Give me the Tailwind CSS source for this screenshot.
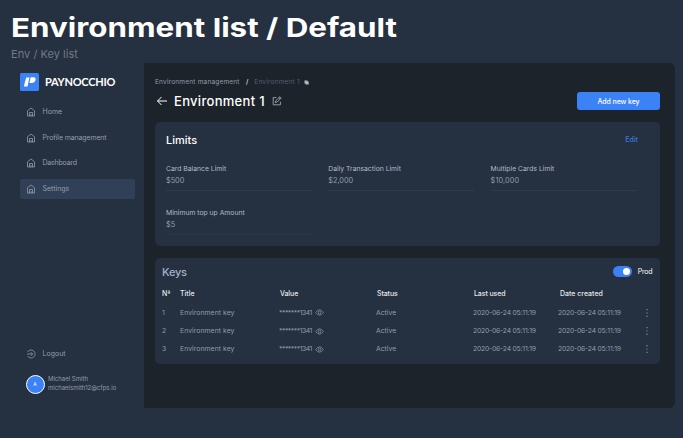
<!DOCTYPE html>
<html lang="en">
<head>
<meta charset="utf-8">
<title>Environment list</title>
<script src="https://cdn.jsdelivr.net/npm/@tailwindcss/browser@4"></script>
</head>
<body class="w-[683px] h-[438px] overflow-hidden bg-[#253040] font-['Inter',sans-serif] text-[7px] leading-[10px] text-[#949daa] whitespace-nowrap">
<svg class="hidden">
  <symbol id="home" viewBox="0 0 10 10"><path d="M1.5 3.8 5 1 8.5 3.8V9h-7zM3.5 9V5.5h3V9M5 7v2" fill="none" stroke="currentColor" stroke-width=".8" stroke-linejoin="round"/></symbol>
  <symbol id="eye" viewBox="0 0 10 8"><path d="M.6 4Q5-2.2 9.4 4 5 10.2.6 4Z" fill="none" stroke="currentColor" stroke-width=".8"/><circle cx="5" cy="4" r="1.5" fill="none" stroke="currentColor" stroke-width=".8"/></symbol>
  <symbol id="dots" viewBox="0 0 4 10"><path d="M1.5 1h1v1.2h-1zM1.5 4.4h1v1.2h-1zM1.5 7.8h1V9h-1z" fill="currentColor"/></symbol>
</svg>
<header class="h-[62.5px] pl-[11px] pt-[11px]">
  <h1 class="w-max origin-left scale-x-[1.205] text-[26px] leading-[34px] font-bold text-white">Environment list / Default</h1>
  <p class="mt-[2px] text-[11px] leading-[15px] tracking-[0.04px] text-[#727a84]">Env / Key list</p>
</header>
<div class="flex h-[345.5px]">
  <aside class="w-[143.5px] flex flex-col pl-[20px] pt-[10.5px]">
    <div class="flex items-center h-[18px]">
      <svg class="w-[19px] h-[18px]" viewBox="0 0 19 18"><rect width="19" height="18" rx="1.5" fill="#3b82f6"/><path d="M6.2 4.5h3.2L7.6 13.6H3.9L4.7 10zM10.6 4.3h2.6c2.2 0 2.8 1.2 2.2 3-.5 1.8-1.8 2.8-3.6 2.8H9.5z" fill="#fff"/></svg>
      <span class="ml-[6px] font-['Lato',sans-serif] font-bold text-[11px] tracking-[-0.25px] leading-[18px] text-white">PAYNOCCHIO</span>
    </div>
    <nav class="mt-[10.9px] w-[114.5px] flex flex-col gap-[5.8px]">
      <a class="h-[20px] flex items-center pl-[5.5px] gap-[7px]"><svg class="size-[10px]"><use href="#home"/></svg><span>Home</span></a>
      <a class="h-[20px] flex items-center pl-[5.5px] gap-[7px]"><svg class="size-[10px]"><use href="#home"/></svg><span class="tracking-[-0.13px]">Profile management</span></a>
      <a class="h-[20px] flex items-center pl-[5.5px] gap-[7px]"><svg class="size-[10px]"><use href="#home"/></svg><span class="tracking-[-0.2px]">Dashboard</span></a>
      <a class="h-[20px] flex items-center pl-[5.5px] gap-[7px] rounded-[2px] bg-[#304056]"><svg class="size-[10px]"><use href="#home"/></svg><span>Settings</span></a>
    </nav>
    <div class="mt-[144.7px] h-[20px] flex items-center pl-[5.5px] gap-[7px]">
      <svg class="size-[10px]" viewBox="0 0 10 10" fill="none" stroke="currentColor" stroke-width=".8"><path d="M1.6 3a4 4 0 1 1 0 4M1 5h5.5M4.8 3.2 6.6 5 4.8 6.8"/></svg><span>Logout</span>
    </div>
    <div class="mt-[10.6px] flex items-center pl-[5.5px] h-[19px]">
      <div class="size-[19px] shrink-0 rounded-full border border-white bg-[#3b82f6] flex items-center justify-center text-[5px] text-white">A</div>
      <div class="ml-[3.5px] text-[6px] leading-[8.6px]"><p>Michael Smith</p><p>michaelsmith12@cfps.io</p></div>
    </div>
  </aside>
  <main class="w-[531.5px] rounded-r-[6px] bg-[#1c232b] pl-[11.5px] pr-[15px] pt-[14.5px]">
    <div class="flex items-center h-[10px] text-[6.5px]"><span class="w-[91px] tracking-[0.2px]">Environment management</span><span class="w-[8.3px] text-white">/</span><span class="w-[50px] tracking-[0.2px] text-[#535f73]">Environment 1</span>
      <svg class="size-[5px]" viewBox="0 0 5 5"><path d="M.5.5h3v1H4.7v3H1.6v-1H.5z" fill="#b5bbc4"/></svg></div>
    <div class="mt-[5px] h-[18px] flex items-center">
      <svg class="ml-[1px] w-[12px] h-[10px]" viewBox="0 0 12 10" fill="none" stroke="#fff"><path d="M11 5H1.5M5.5 1l-4 4 4 4"/></svg>
      <h2 class="ml-[6px] w-[92px] text-[13px] leading-[18px] tracking-[0.3px] font-medium text-white">Environment 1</h2>
      <svg class="ml-[6px] size-[10px]" viewBox="0 0 10 10" fill="none" stroke="#a1a7af" stroke-width=".9"><path d="M4.3 1.6H1.2v7.2h7.2V5.7M3.4 6.6l.4-1.9L7.9.7l1.3 1.3-4 4zM6.9 1.7l1.3 1.3"/></svg>
      <button class="ml-auto w-[83px] h-[18px] pt-px rounded-[3px] bg-[#3b82f6] text-white font-medium tracking-[-0.1px]">Add new key</button>
    </div>
    <section class="mt-[12px] h-[124px] rounded-[5px] bg-[#253040] px-[11px] pt-[11px]">
      <div class="flex justify-between items-center h-[14px] pr-[11px]"><h3 class="text-[11px] leading-[14px] font-medium text-white">Limits</h3><a class="font-medium text-[#3878df]">Edit</a></div>
      <div class="mt-[16.6px] grid grid-cols-[146px_146px_146px] gap-x-[16.3px] gap-y-[16.5px]">
        <div class="h-[27.5px] border-b border-[#303c4c]"><p class="text-[6.8px] text-[#b1bbca]">Card Balance Limit</p><p class="mt-[2.9px] text-[7.3px]">$500</p></div>
        <div class="h-[27.5px] border-b border-[#303c4c]"><p class="text-[6.8px] text-[#b1bbca]">Daily Transaction Limit</p><p class="mt-[2.9px] text-[7.3px]">$2,000</p></div>
        <div class="h-[27.5px] border-b border-[#303c4c]"><p class="text-[6.8px] text-[#b1bbca]">Multiple Cards Limit</p><p class="mt-[2.9px] text-[7.3px] tracking-[0.1px]">$10,000</p></div>
        <div class="h-[27.5px] border-b border-[#2b3747]"><p class="text-[6.8px] text-[#b1bbca]">Minimum top up Amount</p><p class="mt-[2.9px] text-[7.3px]">$5</p></div>
      </div>
    </section>
    <section class="mt-[11.5px] h-[106.5px] rounded-[5px] bg-[#253040] pl-[7px] pr-[7.5px] pt-[6.4px]">
      <div class="flex items-center h-[16px]"><h3 class="text-[11px] leading-[16px] font-medium tracking-[-0.2px] text-[#a7b2cb]">Keys</h3>
        <span class="ml-auto w-[19px] h-[11px] rounded-full bg-[#3b82f6] flex items-center justify-end pr-[2px]"><i class="size-[7px] rounded-full bg-white"></i></span><span class="ml-[5.5px] tracking-[-0.15px] text-white">Prod</span></div>
      <div class="mt-[9.6px] grid grid-cols-[18px_99px_97px_97px_85px_84px_10px] h-[10px] items-center font-medium text-[#e5e8ec]"><span>Nª</span><span>Title</span><span class="pl-px tracking-[-0.1px]">Value</span><span class="pl-px tracking-[-0.1px]">Status</span><span class="pl-px tracking-[-0.1px]">Last used</span><span class="pl-[2px]">Date created</span></div>
      <div class="mt-[4px] text-[6.8px]">
        <div class="grid grid-cols-[18px_99px_97px_97px_85px_84px_10px] h-[18.4px] items-center"><span>1</span><span class="tracking-[0.08px]">Environment key</span><span class="flex items-center"><span class="w-[36px] tracking-[-0.45px]">*******1341</span><svg class="w-[9px] h-[7px]"><use href="#eye"/></svg></span><span>Active</span><span class="tracking-[-0.2px]">2020-06-24 05:11:19</span><span class="tracking-[-0.2px]">2020-06-24 05:11:19</span><svg class="ml-[3px] w-[4px] h-[10px]"><use href="#dots"/></svg></div>
        <div class="grid grid-cols-[18px_99px_97px_97px_85px_84px_10px] h-[18.4px] items-center"><span>2</span><span class="tracking-[0.08px]">Environment key</span><span class="flex items-center"><span class="w-[36px] tracking-[-0.45px]">*******1341</span><svg class="w-[9px] h-[7px]"><use href="#eye"/></svg></span><span>Active</span><span class="tracking-[-0.2px]">2020-06-24 05:11:19</span><span class="tracking-[-0.2px]">2020-06-24 05:11:19</span><svg class="ml-[3px] w-[4px] h-[10px]"><use href="#dots"/></svg></div>
        <div class="grid grid-cols-[18px_99px_97px_97px_85px_84px_10px] h-[18.4px] items-center"><span>3</span><span class="tracking-[0.08px]">Environment key</span><span class="flex items-center"><span class="w-[36px] tracking-[-0.45px]">*******1341</span><svg class="w-[9px] h-[7px]"><use href="#eye"/></svg></span><span>Active</span><span class="tracking-[-0.2px]">2020-06-24 05:11:19</span><span class="tracking-[-0.2px]">2020-06-24 05:11:19</span><svg class="ml-[3px] w-[4px] h-[10px]"><use href="#dots"/></svg></div>
      </div>
    </section>
  </main>
</div>
</body>
</html>
